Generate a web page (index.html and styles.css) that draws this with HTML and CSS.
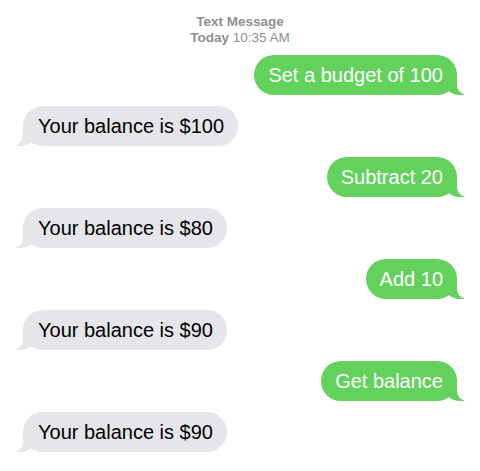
FILE: index.html
```html
<!DOCTYPE html>
<html>
<head>
<meta charset="utf-8">
<link rel="stylesheet" href="styles.css">
</head>
<body>
<div class="thread">
  <div class="header">
    <div class="kind">Text Message</div>
    <div class="time"><span class="day">Today</span> 10:35 AM</div>
  </div>
  <div class="bubble sent">Set a budget of 100</div>
  <div class="bubble recv">Your balance is $100</div>
  <div class="bubble sent">Subtract 20</div>
  <div class="bubble recv">Your balance is $80</div>
  <div class="bubble sent">Add 10</div>
  <div class="bubble recv">Your balance is $90</div>
  <div class="bubble sent">Get balance</div>
  <div class="bubble recv">Your balance is $90</div>
</div>
</body>
</html>
```
FILE: styles.css
```css
html, body {
  margin: 0;
  padding: 0;
  background: #ffffff;
}
body {
  font-family: "Liberation Sans", Arial, sans-serif;
  width: 480px;
  height: 471px;
  overflow: hidden;
}
.thread {
  display: flex;
  flex-direction: column;
  gap: 11px;
  padding: 0 23px;
}
.header {
  align-self: center;
  text-align: center;
  color: #8e8e93;
  font-size: 13.5px;
  line-height: 16px;
  padding-top: 14px;
  margin-bottom: -2px;
}
.kind, .day {
  font-weight: bold;
}
.bubble {
  position: relative;
  font-size: 20px;
  line-height: 24px;
  padding: 8px 14px;
  border-radius: 20px;
  max-width: 300px;
}
.sent {
  align-self: flex-end;
  background: #63d25d;
  color: #ffffff;
}
.recv {
  align-self: flex-start;
  background: #e5e5ea;
  color: #000000;
  padding-left: 15px;
}
.bubble::before,
.bubble::after {
  content: "";
  position: absolute;
  bottom: 0;
  height: 22px;
}
.sent::before {
  right: -7px;
  width: 20px;
  background: #63d25d;
  border-bottom-left-radius: 16px 14px;
}
.sent::after {
  right: -26px;
  width: 26px;
  background: #ffffff;
  border-bottom-left-radius: 10px;
}
.recv::before {
  left: -7px;
  width: 20px;
  background: #e5e5ea;
  border-bottom-right-radius: 16px 14px;
}
.recv::after {
  left: -26px;
  width: 26px;
  background: #ffffff;
  border-bottom-right-radius: 10px;
}
```
